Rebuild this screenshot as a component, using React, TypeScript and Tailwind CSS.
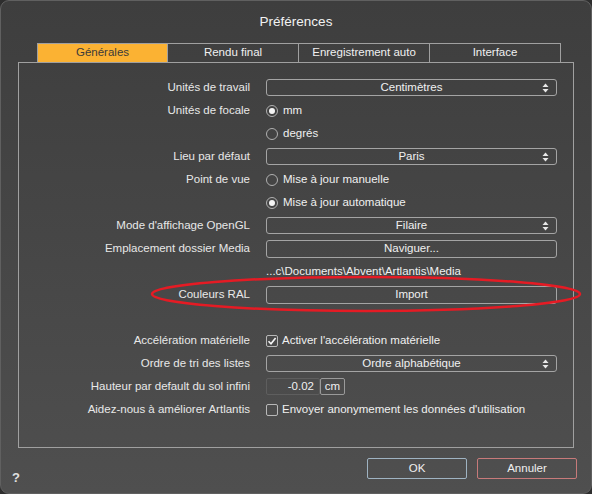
import React from "react";

const font = { fontFamily: '"Liberation Sans", Arial, sans-serif' };

const Arrows = () => (
  <svg width="7" height="10" viewBox="0 0 7 10" className="absolute right-[7px] top-1/2 -translate-y-1/2">
    <path d="M3.5 0.5 L6.5 4 L0.5 4 Z" fill="#e8e8e8" />
    <path d="M3.5 9.5 L6.5 6 L0.5 6 Z" fill="#e8e8e8" />
  </svg>
);

const Select = ({ value }: { value: string }) => (
  <div className="relative w-full h-[17px] border border-[#a4a4a4] rounded-[3px] flex items-center justify-center text-[#f0f0f0]">
    {value}
    <Arrows />
  </div>
);

const Button = ({ value }: { value: string }) => (
  <div className="w-full h-[18px] border border-[#a4a4a4] rounded-[3px] flex items-center justify-center text-[#f0f0f0]">
    {value}
  </div>
);

const Radio = ({ checked, label }: { checked?: boolean; label: string }) => (
  <div className="flex items-center gap-[5px] text-[#f0f0f0]">
    <span className="w-[12px] h-[12px] rounded-full border border-[#b0b0b0] flex items-center justify-center">
      {checked && <span className="w-[6px] h-[6px] rounded-full bg-[#f4f4f4]" />}
    </span>
    {label}
  </div>
);

const Check = ({ checked, label }: { checked?: boolean; label: string }) => (
  <div className="flex items-center gap-[4px] text-[#f0f0f0]">
    <span className="w-[12px] h-[12px] rounded-[2px] border border-[#b8b8b8] flex items-center justify-center">
      {checked && (
        <svg width="10" height="10" viewBox="0 0 10 10">
          <path d="M1.5 5.2 L4 7.8 L8.6 2" stroke="#f4f4f4" strokeWidth="1.6" fill="none" />
        </svg>
      )}
    </span>
    {label}
  </div>
);

const Row = ({ label, children }: { label?: string; children?: React.ReactNode }) => (
  <div className="flex items-center h-[23px]">
    <div className="w-[231px] text-right text-[#e8e8e8] whitespace-nowrap">{label}</div>
    <div className="ml-[16px] w-[291px] flex items-center whitespace-nowrap">{children}</div>
  </div>
);

const tabs = ["Générales", "Rendu final", "Enregistrement auto", "Interface"];

export default function App() {
  return (
    <div className="w-[592px] h-[494px] bg-[#2e2e2e]" style={font}>
      <div className="relative w-[592px] h-[494px] rounded-[9px] border border-[#606060] bg-gradient-to-b from-[#3e3e3e] to-[#4f4f4f] text-[11.5px] overflow-hidden">
        <div className="h-[42px] flex items-center justify-center text-[13.5px] text-[#f2f2f2]">Préférences</div>
        <div className="flex ml-[36px] h-[19px]">
          {tabs.map((t, i) => (
            <div
              key={t}
              className={
                i === 0
                  ? "w-[131px] flex items-center justify-center bg-[#fbb233] text-[#3a3a3a] border-t border-l border-r border-[#a0a0a0]"
                  : "w-[131px] flex items-center justify-center text-[#f0f0f0] border-t border-r border-[#a0a0a0]"
              }
            >
              {t}
            </div>
          ))}
        </div>
        <div className="mx-[17px] h-[386px] border border-[#a0a0a0] pt-[13px]">
          <Row label="Unités de travail">
            <Select value="Centimètres" />
          </Row>
          <Row label="Unités de focale">
            <Radio checked label="mm" />
          </Row>
          <Row>
            <Radio label="degrés" />
          </Row>
          <Row label="Lieu par défaut">
            <Select value="Paris" />
          </Row>
          <Row label="Point de vue">
            <Radio label="Mise à jour manuelle" />
          </Row>
          <Row>
            <Radio checked label="Mise à jour automatique" />
          </Row>
          <Row label="Mode d'affichage OpenGL">
            <Select value="Filaire" />
          </Row>
          <Row label="Emplacement dossier Media">
            <Button value="Naviguer..." />
          </Row>
          <Row>
            <span className="text-[#f0f0f0]">...c\Documents\Abvent\Artlantis\Media</span>
          </Row>
          <Row label="Couleurs RAL">
            <Button value="Import" />
          </Row>
          <Row />
          <Row label="Accélération matérielle">
            <Check checked label="Activer l'accélération matérielle" />
          </Row>
          <Row label="Ordre de tri des listes">
            <Select value="Ordre alphabétique" />
          </Row>
          <Row label="Hauteur par default du sol infini">
            <div className="flex h-[17px]">
              <div className="w-[54px] border border-[#5e5e5e] rounded-[2px] flex items-center justify-end pr-[5px] text-[#f0f0f0]">
                -0.02
              </div>
              <div className="w-[25px] border border-[#9a9a9a] rounded-[2px] flex items-center justify-center text-[#f0f0f0]">
                cm
              </div>
            </div>
          </Row>
          <Row label="Aidez-nous à améliorer Artlantis">
            <Check label="Envoyer anonymement les données d'utilisation" />
          </Row>
        </div>
        <div className="flex items-center mt-[10px] h-[21px] pl-[11px] pr-[14px]">
          <span className="mt-[18px] text-[13px] font-bold text-[#e0e0e0]">?</span>
          <div className="ml-auto flex gap-[10px]">
            <div className="w-[100px] h-[21px] border border-[#9fb3c2] rounded-[2px] flex items-center justify-center text-[#f0f0f0]">
              OK
            </div>
            <div className="w-[100px] h-[21px] border border-[#c77a7a] rounded-[2px] flex items-center justify-center text-[#f0f0f0]">
              Annuler
            </div>
          </div>
        </div>
        <svg className="absolute left-0 top-0 pointer-events-none" width="592" height="494">
          <ellipse cx="365" cy="293" rx="214" ry="17" fill="none" stroke="#e51b24" strokeWidth="2.5" />
        </svg>
      </div>
    </div>
  );
}
